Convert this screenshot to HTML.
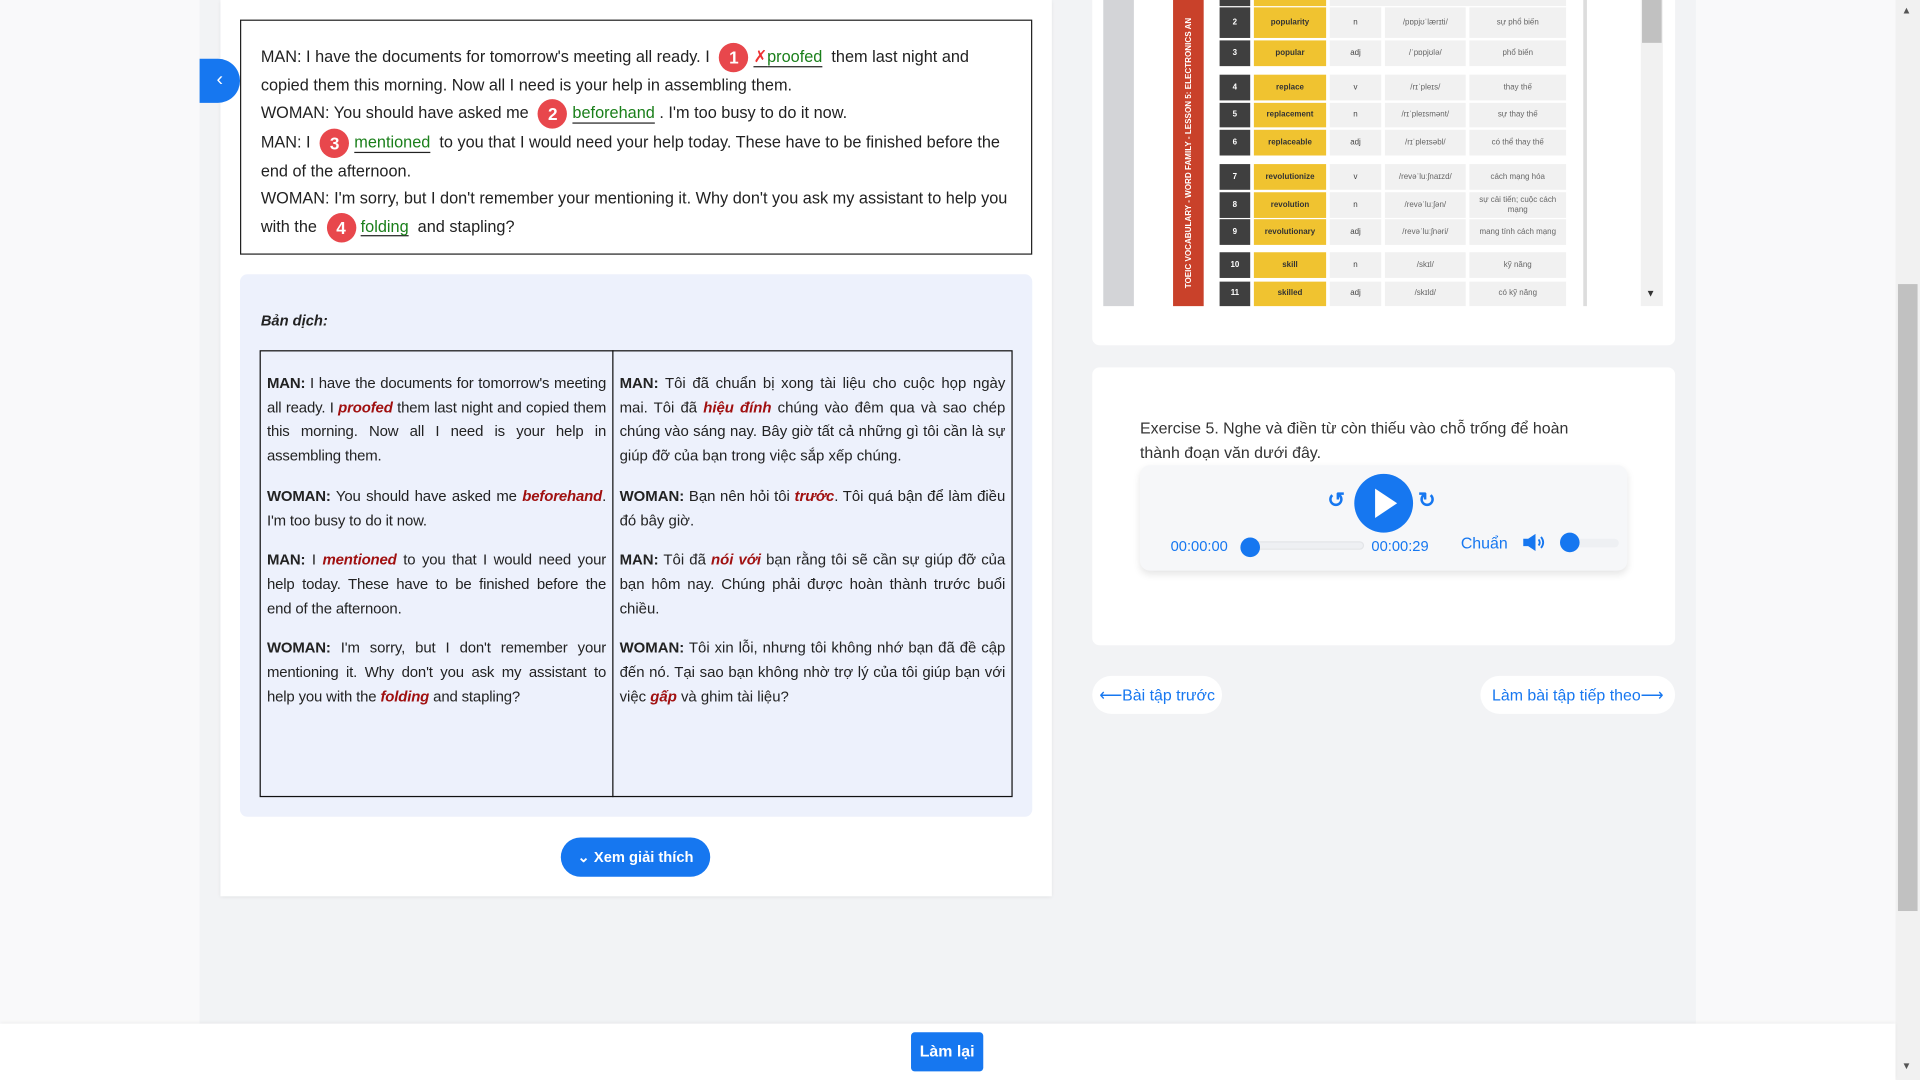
<!DOCTYPE html>
<html><head><meta charset="utf-8">
<style>
*{box-sizing:border-box;margin:0;padding:0}
html,body{width:1920px;height:1080px;overflow:hidden;background:#f9f9fa}
#w{position:absolute;left:0;top:0;width:1568px;height:882px;transform:scale(1.22449);transform-origin:0 0;font-family:"Liberation Sans","Noto Sans CJK SC",sans-serif;color:#222}
.a{position:absolute}
.num{display:inline-block;width:24px;height:24px;border-radius:50%;background:#e8474c;color:#fff;font-weight:bold;font-size:14px;text-align:center;line-height:24px;vertical-align:middle;margin:0 4px}
.ans{color:#1a7f1a;text-decoration:underline;text-decoration-color:#222;text-underline-offset:3px}
.tr{font-size:12.2px;line-height:19.7px;text-align:justify;letter-spacing:-0.12px}
.tr p{margin-bottom:13px}
.tr i{color:#a01010;font-weight:bold}
.tbl div{position:absolute;font-size:6.5px;text-align:center;font-weight:bold}
</style></head><body><div id="w">
<div class="a" style="left:163px;top:0;width:1222px;height:836px;background:#f2f3f5"></div>
<div class="a" style="left:1548px;top:0;width:20px;height:882px;background:#f1f1f1"></div>
<div class="a" style="left:1550px;top:232px;width:16px;height:512px;background:#c1c1c1"></div>
<div class="a" style="left:1553px;top:4px;font-size:8px;color:#555">▲</div>
<div class="a" style="left:1553px;top:866px;font-size:8px;color:#555">▼</div>
<div class="a" style="left:180px;top:0;width:679px;height:732px;background:#fff;box-shadow:0 1px 3px rgba(0,0,0,.08)"></div>
<div class="a" style="left:163px;top:48px;width:33px;height:36px;background:#1677f0;border-radius:0 18px 18px 0;color:#fff;text-align:center;line-height:36px;font-size:16px">‹</div>
<div class="a" style="left:196px;top:16px;width:647px;height:192px;border:1px solid #222;padding:18px 16px 0 16px;font-size:13.3px;line-height:22.2px;color:#222">
MAN: I have the documents for tomorrow's meeting all ready. I <span class="num">1</span><span class="ans"><span style="color:#e33">✗</span>proofed</span>&nbsp; them last night and copied them this morning. Now all I need is your help in assembling them.<br>
WOMAN: You should have asked me <span class="num">2</span><span class="ans">beforehand</span> . I'm too busy to do it now.<br>
MAN: I <span class="num">3</span><span class="ans">mentioned</span>&nbsp; to you that I would need your help today. These have to be finished before the end of the afternoon.<br>
WOMAN: I'm sorry, but I don't remember your mentioning it. Why don't you ask my assistant to help you with the <span class="num">4</span><span class="ans">folding</span>&nbsp; and stapling?
</div>
<div class="a" style="left:196px;top:224px;width:647px;height:443px;background:#edf1fc;border-radius:6px"></div>
<div class="a" style="left:213px;top:255px;font-size:12px;font-weight:bold;font-style:italic">Bản dịch:</div>
<div class="a" style="left:212px;top:286px;width:615px;height:365px;border:1px solid #111"></div>
<div class="a" style="left:500px;top:286px;width:1px;height:365px;background:#111"></div>
<div class="a tr" style="left:218px;top:304px;width:277px">
<p><b>MAN:</b> I have the documents for tomorrow's meeting all ready. I <i>proofed</i> them last night and copied them this morning. Now all I need is your help in assembling them.</p>
<p><b>WOMAN:</b> You should have asked me <i>beforehand</i>. I'm too busy to do it now.</p>
<p><b>MAN:</b> I <i>mentioned</i> to you that I would need your help today. These have to be finished before the end of the afternoon.</p>
<p><b>WOMAN:</b> I'm sorry, but I don't remember your mentioning it. Why don't you ask my assistant to help you with the <i>folding</i> and stapling?</p>
</div>
<div class="a tr" style="left:506px;top:304px;width:315px;letter-spacing:0">
<p><b>MAN:</b> Tôi đã chuẩn bị xong tài liệu cho cuộc họp ngày mai. Tôi đã <i>hiệu đính</i> chúng vào đêm qua và sao chép chúng vào sáng nay. Bây giờ tất cả những gì tôi cần là sự giúp đỡ của bạn trong việc sắp xếp chúng.</p>
<p><b>WOMAN:</b> Bạn nên hỏi tôi <i>trước</i>. Tôi quá bận để làm điều đó bây giờ.</p>
<p><b>MAN:</b> Tôi đã <i>nói với</i> bạn rằng tôi sẽ cần sự giúp đỡ của bạn hôm nay. Chúng phải được hoàn thành trước buổi chiều.</p>
<p><b>WOMAN:</b> Tôi xin lỗi, nhưng tôi không nhớ bạn đã đề cập đến nó. Tại sao bạn không nhờ trợ lý của tôi giúp bạn với việc <i>gấp</i> và ghim tài liệu?</p>
</div>
<div class="a" style="left:458px;top:684px;width:122px;height:32px;background:#1677f0;border-radius:16px;color:#fff;font-size:12px;font-weight:bold;text-align:center;line-height:32px">⌄ Xem giải thích</div>
<div class="a" style="left:892px;top:0;width:476px;height:282px;background:#fff;border-radius:0 0 6px 6px"></div>
<div class="a" style="left:901px;top:0;width:25px;height:250px;background:#d3d4d7"></div>
<div class="a" style="left:958px;top:0;width:25px;height:250px;background:#c9412a"></div>
<div class="a" style="left:971px;top:125px;transform:translate(-50%,-50%) rotate(-90deg);white-space:nowrap;color:#fff;font-size:6.6px;font-weight:bold">TOEIC VOCABULARY - WORD FAMILY - LESSON 5: ELECTRONICS AN</div>
<div class="a tbl">
<div style="left:996px;top:-16px;width:25px;height:21px;background:#3f3f3f"></div><div style="left:1024px;top:-16px;width:59px;height:21px;background:#f0c330"></div><div style="left:1086px;top:-16px;width:193px;height:21px;background:#f1f1f1"></div>
</div>
<div class="a tbl" id="t"></div>
<div class="a" style="left:1293px;top:0;width:3px;height:250px;background:#ddd"></div>
<div class="a" style="left:1340px;top:0;width:18px;height:250px;background:#f1f1f1"></div>
<div class="a" style="left:1341px;top:0;width:16px;height:35px;background:#c1c1c1"></div>
<div class="a" style="left:1344px;top:235px;font-size:8px;color:#333">▼</div>
<div class="a" style="left:892px;top:300px;width:476px;height:227px;background:#fff;border-radius:6px"></div>
<div class="a" style="left:931px;top:340px;width:376px;font-size:13px;line-height:19.5px;color:#333">Exercise 5. Nghe và điền từ còn thiếu vào chỗ trống để hoàn thành đoạn văn dưới đây.</div>
<div class="a" style="left:931px;top:380px;width:398px;height:86px;background:#f6f7f9;border-radius:8px;box-shadow:0 3px 6px rgba(0,0,0,.1)"></div>
<div class="a" style="left:1106px;top:387px;width:48px;height:48px;border-radius:50%;background:#1677f0"></div>
<div class="a" style="left:1123px;top:399px;width:0;height:0;border-left:18px solid #fff;border-top:12px solid transparent;border-bottom:12px solid transparent"></div>
<div class="a" style="left:1084px;top:399px;color:#1677f0;font-size:17px;font-weight:bold">↺</div>
<div class="a" style="left:1158px;top:399px;color:#1677f0;font-size:17px;font-weight:bold">↻</div>
<div class="a" style="left:956px;top:439px;color:#1677f0;font-size:12px">00:00:00</div>
<div class="a" style="left:1020px;top:442px;width:94px;height:7px;border-radius:4px;background:#eef0f3;border:1px solid #e3e5e8"></div>
<div class="a" style="left:1013px;top:439px;width:16px;height:16px;border-radius:50%;background:#1677f0"></div>
<div class="a" style="left:1120px;top:439px;color:#1677f0;font-size:12px">00:00:29</div>
<div class="a" style="left:1193px;top:436px;color:#1677f0;font-size:13px">Chuẩn</div>
<svg class="a" style="left:1243px;top:435px" width="20" height="16" viewBox="0 0 20 16"><path d="M1 5h4l6-4v14l-6-4H1z" fill="#1677f0"/><path d="M13.5 5.5q2 2.5 0 5M15.5 3.5q3.5 4.5 0 9" stroke="#1677f0" stroke-width="1.5" fill="none"/></svg>
<div class="a" style="left:1282px;top:440px;width:40px;height:7px;border-radius:4px;background:#eef0f3"></div>
<div class="a" style="left:1274px;top:435px;width:16px;height:16px;border-radius:50%;background:#1677f0"></div>
<div class="a" style="left:892px;top:552px;width:106px;height:31px;background:#fff;border-radius:16px;color:#1677f0;font-size:13px;line-height:31px;text-align:center">⟵Bài tập trước</div>
<div class="a" style="left:1209px;top:552px;width:159px;height:31px;background:#fff;border-radius:16px;color:#1677f0;font-size:13px;line-height:31px;text-align:center">Làm bài tập tiếp theo⟶</div>
<div class="a" style="left:0;top:836px;width:1548px;height:46px;background:#fff;box-shadow:0 -1px 3px rgba(0,0,0,.05)"></div>
<div class="a" style="left:744px;top:843px;width:59px;height:32px;background:#1677f0;border-radius:3px;color:#fff;font-size:13px;font-weight:bold;text-align:center;line-height:32px">Làm lại</div>
</div>
<script>
var rows=[[6,25,'2','popularity','n','/pɒpjʊˈlærɪti/','sự phổ biến'],[33,21,'3','popular','adj','/ˈpɒpjʊlə/','phổ biến'],[61,21,'4','replace','v','/rɪˈpleɪs/','thay thế'],[84,20,'5','replacement','n','/rɪˈpleɪsmənt/','sự thay thế'],[106,21,'6','replaceable','adj','/rɪˈpleɪsəbl/','có thể thay thế'],[134,21,'7','revolutionize','v','/revəˈluːʃnaɪzd/','cách mạng hóa'],[157,21,'8','revolution','n','/revəˈluːʃən/','sự cải tiến; cuộc cách mạng'],[179,21,'9','revolutionary','adj','/revəˈluːʃnəri/','mang tính cách mạng'],[206,21,'10','skill','n','/skɪl/','kỹ năng'],[230,20,'11','skilled','adj','/skɪld/','có kỹ năng']];
var cols=[[996,25,'#3f3f3f','#fff'],[1024,59,'#f0c330','#333'],[1086,42,'#f1f1f1','#444'],[1131,66,'#f1f1f1','#666'],[1200,79,'#f1f1f1','#666']];
var h='';rows.forEach(function(r){cols.forEach(function(c,i){h+='<div style="left:'+c[0]+'px;top:'+r[0]+'px;width:'+c[1]+'px;height:'+r[1]+'px;background:'+c[2]+';color:'+c[3]+';display:flex;align-items:center;justify-content:center;line-height:8px;font-weight:'+(i<2?'bold':'normal')+'">'+r[i+2]+'</div>'})});
document.getElementById('t').innerHTML=h;
</script>
</body></html>
